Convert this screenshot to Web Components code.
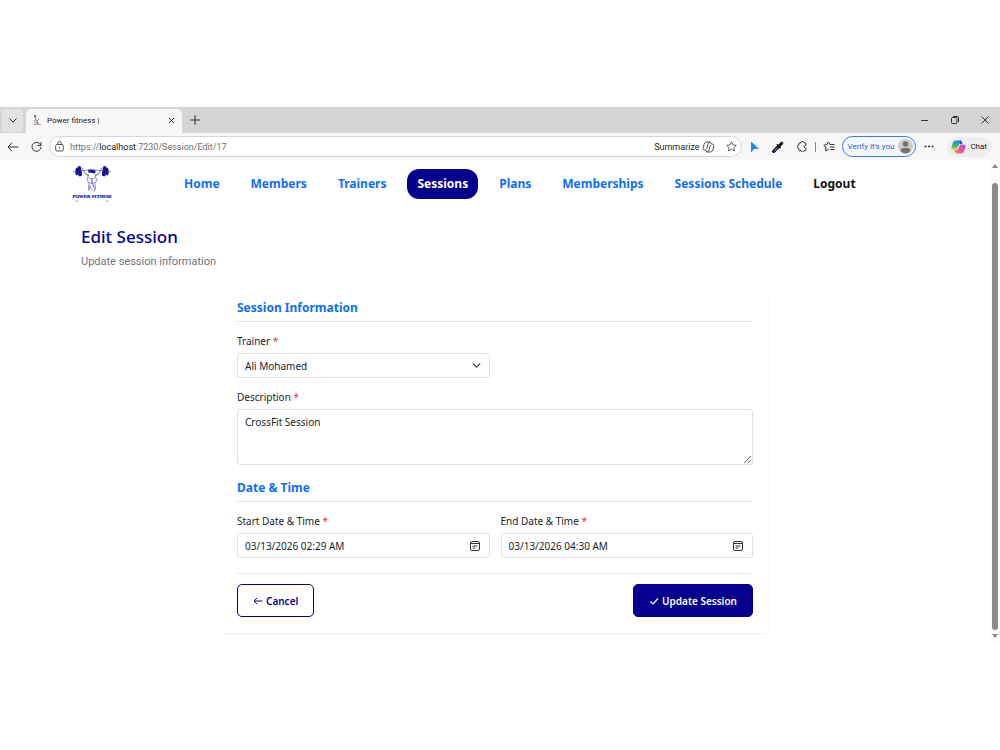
<!DOCTYPE html>
<html lang="en">
<head>
<meta charset="utf-8">
<title>Power fitness |</title>
<style>
	body {
		margin: 0;
		padding-top: 107px;
		background: #fff;
		color: #212529;
		font-family: "Noto Sans", "Open Sans", sans-serif;
		font-size: 10px;
	}
</style>
</head>
<body>
<browser-window>
	<tab-strip slot="tabs">Power fitness |</tab-strip>
	<address-bar slot="toolbar"></address-bar>
	<site-nav>
		<nav-link>Home</nav-link>
		<nav-link>Members</nav-link>
		<nav-link>Trainers</nav-link>
		<nav-link active>Sessions</nav-link>
		<nav-link>Plans</nav-link>
		<nav-link>Memberships</nav-link>
		<nav-link>Sessions Schedule</nav-link>
		<nav-link plain>Logout</nav-link>
	</site-nav>
	<page-title>
		Edit Session
		<span slot="sub">Update session information</span>
	</page-title>
	<session-form></session-form>
</browser-window>

<script>
(function() {
	function define(name, html, setup) {
		const template = document.createElement("template");
		template.innerHTML = html;
		customElements.define(name, class extends HTMLElement {
			constructor() {
				super();
				this.attachShadow({mode: "open"}).appendChild(template.content.cloneNode(true));
			}
			connectedCallback() {
				if (setup) setup(this, this.shadowRoot);
			}
		});
	}

	define("browser-window", `
		<style>
		:host { display: block; }
		.view { display: flex; align-items: stretch; }
		main { flex: 1; min-width: 0; padding-bottom: 9px; }
		.scroll {
			width: 10px;
			display: flex;
			flex-direction: column;
			align-items: center;
			background: #fcfcfc;
		}
		.scroll svg { width: 6px; height: 4px; margin: 4px 0; fill: #858585; }
		.thumb { flex: 1; width: 6px; margin: 11px 0 0; border-radius: 3px; background: #8b8b8b; }
		</style>
		<slot name="tabs"></slot>
		<slot name="toolbar"></slot>
		<div class="view">
			<main><slot></slot></main>
			<div class="scroll">
				<svg viewBox="0 0 6 4"><path d="M0 4 3 0l3 4z"/></svg>
				<div class="thumb"></div>
				<svg viewBox="0 0 6 4"><path d="M0 0h6L3 4z"/></svg>
			</div>
		</div>
	`);

	define("tab-strip", `
		<style>
		:host {
			display: flex;
			height: 26px;
			background: #d5d5d5;
			font-family: Roboto, sans-serif;
			font-size: 8px;
			color: #222;
		}
		button { border: 0; padding: 0; background: none; display: flex; align-items: center; justify-content: center; }
		svg { fill: none; stroke: #333; stroke-width: 1; }
		.menu { width: 21px; height: 23px; margin: 2px 3px 1px 2px; border-radius: 4px; background: #e3e3e3; }
		.tab {
			display: flex;
			align-items: center;
			width: 156px;
			margin-top: 2px;
			box-sizing: border-box;
			padding: 0 5px 2px 6px;
			border-radius: 5px 5px 0 0;
			background: #f7f7f7;
		}
		.name { flex: 1; margin-left: 5px; }
		.tab button { width: 12px; height: 12px; }
		.new { width: 26px; }
		.win { margin-left: auto; display: flex; }
		.win button { width: 30px; }
		</style>
		<button class="menu" aria-label="Tab actions"><svg width="8" height="5" viewBox="0 0 8 5"><path d="M.5.5 4 4 7.500.5"/></svg></button>
		<div class="tab">
			<svg width="10" height="12" viewBox="0 0 10 12">
				<path d="M3 2l1 4 2 2v2M2 6l1 2 3 2M5 7l2-2" stroke="#8c7c76"/>
				<path d="M2 10.500h7" stroke="#b09a90"/>
				<circle cx="3" cy="2" r="1" fill="#594a48" stroke="none"/>
			</svg>
			<span class="name"><slot></slot></span>
			<button aria-label="Close tab"><svg width="7" height="7" viewBox="0 0 7 7"><path d="M1 1l5 5M6 1 1 6"/></svg></button>
		</div>
		<button class="new" aria-label="New tab"><svg width="10" height="10" viewBox="0 0 10 10"><path d="M5 0v10M0 5h10"/></svg></button>
		<div class="win">
			<button aria-label="Minimize"><svg width="8" height="8" viewBox="0 0 8 8"><path d="M0 4.500h7"/></svg></button>
			<button aria-label="Restore"><svg width="8" height="8" viewBox="0 0 8 8"><rect x=".5" y="1.500" width="5.500" height="6" rx="1"/><path d="M2 .5h4.500q1 0 1 1V6"/></svg></button>
			<button aria-label="Close"><svg width="8" height="8" viewBox="0 0 8 8"><path d="M.5.5l7 7M7.500.5l-7 7"/></svg></button>
		</div>
	`);

	define("address-bar", `
		<style>
		:host {
			display: flex;
			align-items: center;
			height: 27px;
			padding: 0 8px 0 7px;
			background: #f7f7f7;
			color: #222;
			font-family: Roboto, sans-serif;
			font-size: 9px;
		}
		button { font: inherit; color: inherit; border: 0; padding: 0; background: none; display: flex; align-items: center; }
		svg { display: block; fill: none; stroke: #333; stroke-width: 1; }
		.back { margin-right: 12px; }
		.reload { margin-right: 7px; }
		.url {
			flex: 1;
			display: flex;
			align-items: center;
			height: 21px;
			box-sizing: border-box;
			padding: 0 4px 0 5px;
			border: 1px solid #d6d6d6;
			border-radius: 11px;
			background: #fff;
		}
		.url svg { stroke: #555; }
		.path { flex: 1; margin-left: 6px; color: #707070; }
		.path b { font-weight: 400; color: #222; }
		.sum { gap: 2px; margin-right: 11px; }
		.tools { display: flex; align-items: center; }
		.tools > * { margin-left: 13px; }
		.tools .first { margin-left: 8px; }
		.tools .line { width: 1px; height: 10px; margin: 0 7px; background: #888; }
		.tools .fav { margin-left: 0; }
		.tools .verify {
			height: 21px;
			gap: 4px;
			padding: 0 2px 0 5px;
			margin-left: 7px;
			border: 1px solid #3b7de0;
			border-radius: 11px;
			color: #2164c8;
			background: #f3f8ff;
			font-size: 8px;
			box-sizing: border-box;
		}
		.tools .dots { margin-left: 8px; }
		.chat { height: 20px; gap: 4px; padding: 0 5px 0 4px; border-radius: 10px; background: #eee; font-size: 8px; }
		</style>
		<button class="back" aria-label="Back"><svg width="12" height="10" viewBox="0 0 12 10"><path d="M11.500 5H1M5 .8 1 5l4 4.200"/></svg></button>
		<button class="reload" aria-label="Reload"><svg width="11" height="11" viewBox="0 0 11 11"><path d="M9.700 4.200A4.500 4.500 0 1 0 10 6M10 1v3.500H6.500"/></svg></button>
		<div class="url">
			<svg width="9" height="11" viewBox="0 0 9 11"><rect x=".7" y="3.500" width="7.600" height="6.500" rx="1.200"/><path d="M2.700 3.500V2.200a1.800 1.800 0 0 1 3.600 0v1.300"/><circle cx="4.500" cy="6.700" r=".4"/></svg>
			<span class="path">https://<b>localhost</b>:7230/Session/Edit/17</span>
			<button class="sum">Summarize <svg width="13" height="12" viewBox="0 0 13 12"><path d="M4 9H2.800Q.7 9 1.200 6.800L2 3.500Q2.600 1 4.700 1H8Q6.600 1 6 3L4.700 8M9 3h1.200q2.100 0 1.600 2.200L11 8.500Q10.400 11 8.300 11H5Q6.400 11 7 9L8.300 4M8 1q1 0 1 2M5 11q-1 0-1-2"/></svg></button>
			<button aria-label="Favorite"><svg width="11" height="11" viewBox="0 0 12 12"><path d="M6 .9 7.600 4.200l3.600.5-2.600 2.500.6 3.600L6 9.100l-3.200 1.700.6-3.600L.8 4.700l3.600-.5z"/></svg></button>
		</div>
		<div class="tools">
			<svg class="first" width="9" height="12" viewBox="0 0 9 12"><path d="M1 .5v11l3-3.500 5-.3z" fill="#1c8cf0" stroke="none"/></svg>
			<svg width="12" height="12" viewBox="0 0 12 12"><path d="M1.700 10.300 6.500 5.500" stroke="#111" stroke-width="3.200" stroke-linecap="round"/><path d="M2 10 5.300 6.700" stroke="#5260d8" stroke-width="1.300"/><path d="M5.200 3.800l3 3" stroke="#111" stroke-width="1.500" stroke-linecap="round"/><path d="M7.500 4.500 9.800 2.200" stroke="#111" stroke-width="3" stroke-linecap="round"/></svg>
			<svg width="11" height="11" viewBox="0 0 11 11"><path d="M9 4V2.800q0-1-1-1H7a1.500 1.500 0 0 0-3 0H3q-1.200 0-1.200 1V4a1.600 1.600 0 0 0 0 3.200v1.300q0 1 1.200 1h1a1.500 1.500 0 0 0 3 0h1q1 0 1-1V7.500L7.800 7a1.500 1.500 0 0 1 0-2.500z"/></svg>
			<span class="line"></span>
			<svg class="fav" width="12" height="11" viewBox="0 0 12 11"><path d="M7.800 3.500H7L5.300.8 3.800 3.700.8 4.200l2.200 2.200-.5 3.400L5.500 8.300M8 3.500h3.500M7 6h4.500M7.500 8.500h4"/></svg>
			<button class="verify">Verify it's you <svg width="15" height="15" viewBox="0 0 15 15"><circle cx="7.500" cy="7.500" r="7.500" fill="#cfcbc8" stroke="none"/><circle cx="7.500" cy="5" r="2.800" fill="#77716e" stroke="none"/><path d="M2.700 12q0-3 2.500-3h4.600q2.500 0 2.500 3-2 2.200-4.800 2.200T2.700 12z" fill="#77716e" stroke="none"/></svg></button>
			<svg class="dots" width="10" height="3" viewBox="0 0 10 3"><path d="M.5 1.500h2M4 1.500h2M7.500 1.500h2" stroke-width="1.500"/></svg>
			<button class="chat"><svg width="15" height="14" viewBox="0 0 15 14">
				<defs>
					<linearGradient id="a" x1="0" y1="0" x2="0" y2="1"><stop stop-color="#188be8"/><stop offset=".6" stop-color="#35b885"/><stop offset="1" stop-color="#f3c52e"/></linearGradient>
					<linearGradient id="b" x1="1" y1="0" x2="0" y2="1"><stop stop-color="#a653e8"/><stop offset=".6" stop-color="#f05490"/><stop offset="1" stop-color="#f9903b"/></linearGradient>
				</defs>
				<path d="M4.500.5h5q1 0 1.500 2l.4 1.500H9Q7.700 4 7.200 6L6 9.500H2.500Q-.3 9.500.6 6.500L2 2.500Q2.700.5 4.500.5z" fill="url(#a)" stroke="none"/>
				<path d="M10.500 13.500h-5q-1 0-1.500-2L3.700 10H6q1.300 0 1.800-2L9 4.500h3.500q2.800 0 1.900 3L13 11.500q-.7 2-2.500 2z" fill="url(#b)" stroke="none"/>
				<path d="M8.500.5h1q1 0 1.500 2l.4 1.500H9z" fill="#1b58c9" stroke="none"/>
			</svg> Chat</button>
		</div>
	`);

	define("site-nav", `
		<style>
		:host { display: flex; align-items: center; height: 48px; padding-left: 72px; }
		svg { flex: none; width: 40px; height: 38px; margin-right: 62px; }
		nav { display: flex; align-items: center; gap: 11px; }
		</style>
		<svg viewBox="0 0 42 40" role="img" aria-label="Power Fitness">
			<g fill="#180f91" stroke="none">
				<ellipse cx="5" cy="7" rx="1.500" ry="4"/><rect x="6" y="1" width="4" height="11" rx="2" transform="rotate(-8 8 6)"/>
				<rect x="32" y="1" width="4" height="11" rx="2" transform="rotate(8 34 6)"/><ellipse cx="37" cy="7" rx="1.500" ry="4"/>
				<path d="M17 5q4-1 8 1l-1 3q-4-1-7-1z"/>
			</g>
			<g fill="none" stroke="#5a54b5" stroke-width=".7">
				<path d="M1 7h3M10 6q10-2 22 0M38 7h3"/>
				<path d="M11 3q2 8 7 8M31 3q-2 8-7 8M12 7q3 4 6 4M30 7q-3 4-6 4"/>
				<path d="M17 11l-1 5 2 4-1 4 1 3M24 11l2 5-2 4 1 5-2 3M18 13q1 3 3 1 2 2 3-1M21 14v6M18 18l3 2 3-2M19 21l-1 5M22 21l2 5M20 15l3 8M19 23l3 4"/>
			</g>
			<text x="21" y="35" text-anchor="middle" font-family="Liberation Serif, serif" font-weight="700" font-size="5" fill="#180f91" stroke="#180f91" stroke-width=".2">POWER FITNESS</text>
			<path d="M3 38h4M35 38h4" stroke="#b9b6df" stroke-width="1"/>
		</svg>
		<nav><slot></slot></nav>
	`);

	define("nav-link", `
		<style>
		:host { display: block; font-size: 12px; font-weight: 700; color: #0d6efd; }
		:host([active]) { color: #fff; }
		:host([plain]) { color: #111; }
		a {
			display: block;
			padding: 0 10px;
			border-radius: 12px;
			color: inherit;
			line-height: 30px;
			text-decoration: none;
			white-space: nowrap;
		}
		:host([active]) a { background: #06008f; }
		</style>
		<a href="#"><slot></slot></a>
	`);

	define("page-title", `
		<style>
		:host { display: block; max-width: 828px; margin: 17px auto 0; }
		h1 { margin: 0; font-size: 17px; font-weight: 500; line-height: 24px; color: #06008f; }
		p { margin: 4px 0 0; font-family: Roboto, sans-serif; font-size: 11px; line-height: 18px; color: #6c757d; }
		</style>
		<h1><slot></slot></h1>
		<p><slot name="sub"></slot></p>
	`);

	define("form-section", `
		<style>
		:host { display: block; }
		h2 {
			margin: 0 0 10px;
			padding-bottom: 4px;
			border-bottom: 1px solid #dee2e6;
			font-size: 12px;
			font-weight: 700;
			line-height: 18px;
			color: #0d6efd;
		}
		</style>
		<h2><slot></slot></h2>
	`);

	define("date-field", `
		<style>
		:host { display: block; }
		label { display: block; margin-bottom: 3px; line-height: 18px; }
		label span { color: #dc3545; }
		.box {
			display: flex;
			align-items: center;
			height: 25px;
			box-sizing: border-box;
			padding: 0 9px 0 7px;
			border: 1px solid #dee2e6;
			border-radius: 3px;
		}
		input { flex: 1; min-width: 0; border: 0; padding: 0; outline: 0; background: none; color: #212529; font: inherit; }
		button { border: 0; padding: 0; background: none; }
		svg { display: block; fill: none; stroke: #333; }
		</style>
		<label for="value"><slot></slot> <span>*</span></label>
		<div class="box">
			<input id="value" type="text">
			<button type="button" aria-label="Show date picker"><svg width="10" height="10" viewBox="0 0 10 10"><rect x=".5" y=".5" width="9" height="9" rx="1.500"/><path d="M1 2.500h8M2.500 5h5M2.500 7h3"/></svg></button>
		</div>
	`, function(el, root) {
		root.getElementById("value").value = el.getAttribute("value");
	});

	define("session-form", `
		<style>
		:host {
			display: block;
			max-width: 546px;
			margin: 16px auto 0;
			box-sizing: border-box;
			padding: 12px 15px 16px;
			border-radius: 4px;
			box-shadow: 0 1px 2px rgba(0, 0, 0, .08);
		}
		.row { display: grid; grid-template-columns: 1fr 1fr; gap: 11px; }
		label { display: block; margin-bottom: 3px; line-height: 18px; }
		label span { color: #dc3545; }
		select, textarea {
			display: block;
			width: 100%;
			height: 25px;
			box-sizing: border-box;
			padding: 0 7px;
			border: 1px solid #dee2e6;
			border-radius: 3px;
			background: #fff;
			color: #212529;
			font: inherit;
		}
		select {
			appearance: none;
			background: #fff url("data:image/svg+xml,%3Csvg xmlns='http://www.w3.org/2000/svg' viewBox='0 0 16 16'%3E%3Cpath fill='none' stroke='%23343a40' stroke-linecap='round' stroke-linejoin='round' stroke-width='2' d='m2 5 6 6 6-6'/%3E%3C/svg%3E") no-repeat right 8px center / 9px 9px;
		}
		textarea { height: 56px; padding: 4px 7px; line-height: 16px; }
		.field { margin-bottom: 10px; }
		.about { margin-bottom: 14px; }
		hr { margin: 15px 0 10px; border: 0; border-top: 1px solid #e9ebed; }
		.actions { display: flex; justify-content: space-between; }
		.actions button {
			display: flex;
			align-items: center;
			gap: 3px;
			height: 33px;
			padding: 0 15px;
			border: 1px solid #06008f;
			border-radius: 5px;
			background: #fff;
			color: #06008f;
			font: inherit;
			font-weight: 600;
		}
		.actions .save { padding: 0 15px; background: #06008f; color: #fff; }
		button svg { width: 10px; height: 10px; fill: none; stroke: currentColor; }
		</style>
		<form>
			<form-section>Session Information</form-section>
			<div class="row field">
				<div>
					<label for="trainer">Trainer <span>*</span></label>
					<select id="trainer"><option>Ali Mohamed</option></select>
				</div>
			</div>
			<div class="about">
				<label for="description">Description <span>*</span></label>
				<textarea id="description">CrossFit Session</textarea>
			</div>
			<form-section>Date &amp; Time</form-section>
			<div class="row">
				<date-field value="03/13/2026 02:29 AM">Start Date &amp; Time</date-field>
				<date-field value="03/13/2026 04:30 AM">End Date &amp; Time</date-field>
			</div>
			<hr>
			<div class="actions">
				<button type="button"><svg viewBox="0 0 10 10"><path d="M9.500 5H1M4 2 1 5l3 3"/></svg>Cancel</button>
				<button class="save" type="submit"><svg viewBox="0 0 10 10"><path d="M1.500 5.500 4 8l5-5.500" stroke-width="1.200"/></svg>Update Session</button>
			</div>
		</form>
	`, function(el, root) {
		root.querySelector("form").addEventListener("submit", (e) => e.preventDefault());
	});
})();
</script>
</body>
</html>
